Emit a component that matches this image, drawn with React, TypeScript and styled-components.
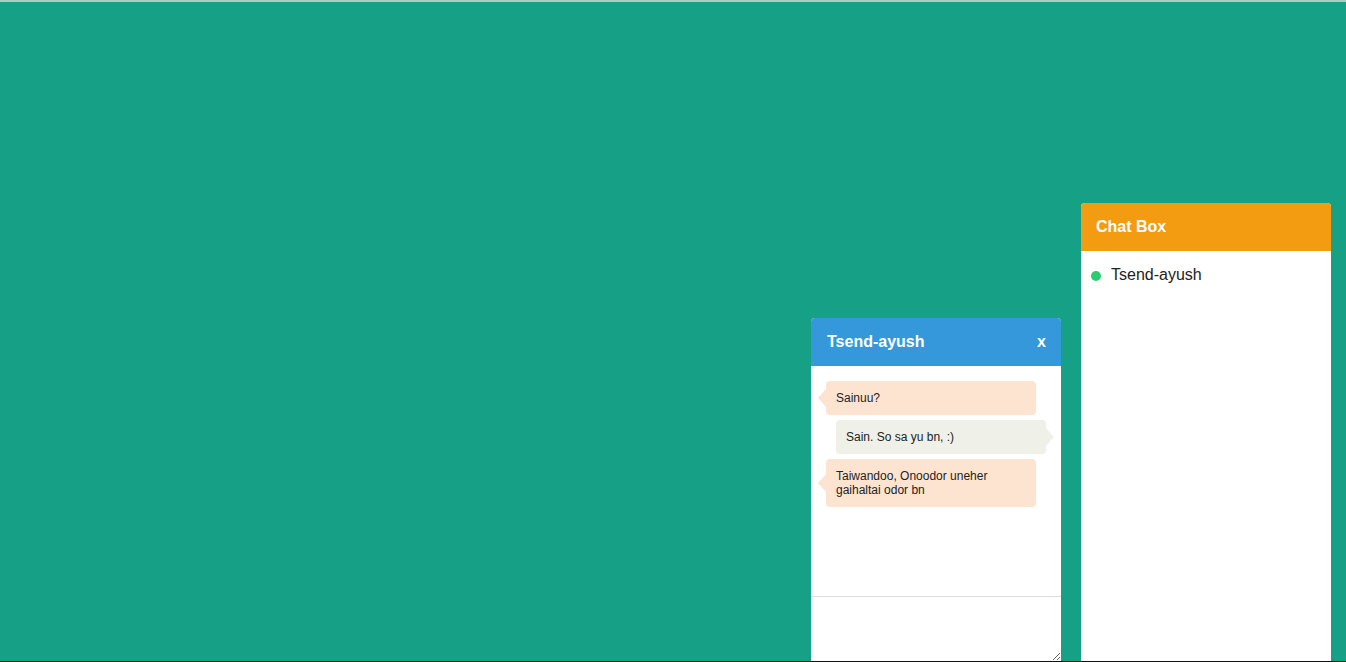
import React from "react";
import styled, { createGlobalStyle } from "styled-components";

const Global = createGlobalStyle`
  html, body { margin: 0; padding: 0; }
  body { font-family: "Liberation Sans", Arial, sans-serif; background: #16a085; overflow: hidden; }
`;

const Page = styled.div`
  box-sizing: border-box;
  height: 662px;
  background: #16a085;
  border-top: 2px solid #a9cdc5;
  border-bottom: 1px solid #111;
  display: flex;
  justify-content: flex-end;
  align-items: flex-end;
  gap: 20px;
  padding-right: 15px;
  overflow: hidden;
`;

const Panel = styled.div<{ $h: number }>`
  width: 250px;
  height: ${(p) => p.$h}px;
  background: #fff;
  border-radius: 4px 4px 0 0;
  display: flex;
  flex-direction: column;
  overflow: hidden;
`;

const Header = styled.div<{ $bg: string }>`
  height: 48px;
  flex: none;
  background: ${(p) => p.$bg};
  color: #fff;
  font-weight: bold;
  font-size: 16px;
  display: flex;
  align-items: center;
  justify-content: space-between;
  padding: 0 15px 0 16px;
`;

const ChatBoxHeader = styled(Header)`
  padding-left: 15px;
`;

const Close = styled.span`
  font-size: 16px;
  font-weight: bold;
  cursor: pointer;
`;

const UserList = styled.div`
  padding: 15px 10px;
`;

const UserRow = styled.div`
  display: flex;
  align-items: center;
  gap: 10px;
  font-size: 16px;
  color: #222;
  height: 18px;
`;

const Dot = styled.span`
  width: 10px;
  height: 10px;
  border-radius: 50%;
  background: #2ecc71;
  margin-top: 2px;
`;

const Messages = styled.div`
  height: 231px;
  flex: none;
  box-sizing: border-box;
  padding: 15px 15px;
  display: flex;
  flex-direction: column;
  gap: 5px;
  border-bottom: 1px solid #ddd;
`;

const Bubble = styled.div<{ $me?: boolean }>`
  position: relative;
  width: 210px;
  box-sizing: border-box;
  margin-left: ${(p) => (p.$me ? "10px" : "0")};
  padding: 10px 10px 10px;
  font-size: 12px;
  line-height: 14px;
  color: #222;
  border-radius: 4px;
  background: ${(p) => (p.$me ? "#eff1e8" : "#fde4d1")};

  &::before {
    content: "";
    position: absolute;
    top: 50%;
    transform: translateY(-50%);
    border-top: 9px solid transparent;
    border-bottom: 9px solid transparent;
    ${(p) =>
      p.$me
        ? `right: -8px; border-left: 8px solid #eff1e8;`
        : `left: -8px; border-right: 8px solid #fde4d1;`}
  }
`;

const Input = styled.textarea`
  flex: 1;
  border: none;
  outline: none;
  margin: 0;
  padding: 4px;
  font-family: "Liberation Sans", Arial, sans-serif;
  font-size: 12px;
  resize: vertical;
  display: block;
`;

export default function App() {
  return (
    <>
      <Global />
      <Page>
        <Panel $h={343}>
          <Header $bg="#3498db">
            <span>Tsend-ayush</span>
            <Close>x</Close>
          </Header>
          <Messages>
            <Bubble>Sainuu?</Bubble>
            <Bubble $me>Sain. So sa yu bn, :)</Bubble>
            <Bubble>Taiwandoo, Onoodor uneher gaihaltai odor bn</Bubble>
          </Messages>
          <Input />
        </Panel>
        <Panel $h={458}>
          <ChatBoxHeader $bg="#f39c12">
            <span>Chat Box</span>
          </ChatBoxHeader>
          <UserList>
            <UserRow>
              <Dot />
              <span>Tsend-ayush</span>
            </UserRow>
          </UserList>
        </Panel>
      </Page>
    </>
  );
}
